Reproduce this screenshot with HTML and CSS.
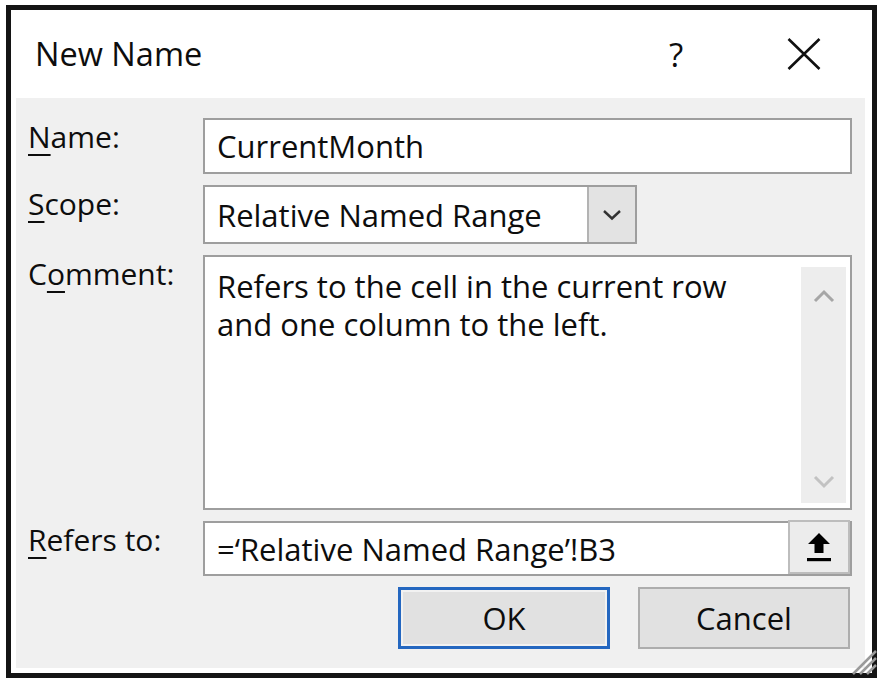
FILE: index.html
```html
<!DOCTYPE html>
<html>
<head>
<meta charset="utf-8">
<link rel="stylesheet" href="styles.css">
</head>
<body>
<div class="dialog">
  <div class="titlebar">
    <span class="title">New Name</span>
    <span class="help">?</span>
    <span class="close">
      <svg width="34" height="32" viewBox="0 0 34 32"><path d="M1.5 1L32.5 31M32.5 1L1.5 31" stroke="#111" stroke-width="2.6" fill="none"/></svg>
    </span>
  </div>
  <div class="panel">
    <div class="label"><u>N</u>ame:</div>
    <div class="field input">CurrentMonth</div>

    <div class="label"><u>S</u>cope:</div>
    <div class="field">
      <div class="combo">
        <span class="combo-text">Relative Named Range</span>
        <span class="combo-btn">
          <svg width="20" height="12" viewBox="0 0 20 12"><path d="M2 2L10 9.5L18 2" stroke="#333" stroke-width="2.4" fill="none"/></svg>
        </span>
      </div>
    </div>

    <div class="label">C<u>o</u>mment:</div>
    <div class="field textarea">
      <div class="ta-text">Refers to the cell in the current row and one column to the left.</div>
      <div class="scroll">
        <svg width="24" height="14" viewBox="0 0 24 14"><path d="M3 12L12 3L21 12" stroke="#a6a6a6" stroke-width="3" fill="none"/></svg>
        <svg width="24" height="14" viewBox="0 0 24 14"><path d="M3 2L12 11L21 2" stroke="#c2c2c2" stroke-width="3" fill="none"/></svg>
      </div>
    </div>

    <div class="label"><u>R</u>efers to:</div>
    <div class="field input refers">
      <span class="ref-text">=‘Relative Named Range’!B3</span>
      <span class="ref-btn">
        <svg width="26" height="32" viewBox="0 0 26 32"><path d="M13 2L2 13H8.5V22H17.5V13H24Z" fill="#000"/><rect x="1" y="27" width="24" height="3.2" fill="#000"/></svg>
      </span>
    </div>

    <div class="buttons">
      <button class="btn ok">OK</button>
      <button class="btn">Cancel</button>
    </div>
  </div>
  <svg class="grip" width="26" height="26" viewBox="0 0 26 26">
    <path d="M2 25L25 2M9 25L25 9M16 25L25 16" stroke="#9a9a9a" stroke-width="2.5" fill="none"/>
  </svg>
</div>
</body>
</html>
```

FILE: styles.css
```css
html, body {
  margin: 0;
  padding: 0;
  background: #fff;
}

body {
  font-family: "Open Sans", "Noto Sans", sans-serif;
  font-weight: 500;
  color: #0d0d0d;
}

.dialog {
  position: relative;
  margin: 5px 0 0 6px;
  width: 871px;
  height: 673px;
  box-sizing: border-box;
  border: 5px solid #141414;
  background: #fff;
  padding: 0 7px 5px 5px;
  display: flex;
  flex-direction: column;
}

.titlebar {
  height: 88px;
  flex: none;
  display: flex;
  align-items: center;
  padding-left: 19px;
}

.title {
  font-size: 32.5px;
  line-height: 1;
}

.help {
  margin-left: auto;
  width: 40px;
  text-align: center;
  font-size: 33px;
  line-height: 1;
}

.close {
  margin-left: 91px;
  margin-right: 44px;
  display: flex;
}

.panel {
  flex: none;
  height: 570px;
  box-sizing: border-box;
  background: #f0f0f0;
  padding: 20px 13px 0 12px;
  display: grid;
  grid-template-columns: 175px 1fr;
  grid-template-rows: 56px 59px 255px 55px 62px;
  row-gap: 11px;
}

.label {
  font-size: 30px;
  line-height: 40px;
  margin-top: -1px;
}

.label u {
  text-decoration-thickness: 2px;
  text-underline-offset: 6px;
}

.field {
  box-sizing: border-box;
}

.input {
  background: #fff;
  border: 2px solid #9e9e9e;
  display: flex;
  align-items: center;
  padding-left: 12px;
  font-size: 31px;
}

.combo {
  width: 434px;
  height: 100%;
  box-sizing: border-box;
  background: #fff;
  border: 2px solid #9e9e9e;
  display: flex;
  align-items: stretch;
  font-size: 31px;
}

.combo-text {
  flex: 1;
  display: flex;
  align-items: center;
  padding-left: 12px;
}

.combo-btn {
  width: 46px;
  background: #e3e3e3;
  border-left: 2px solid #b3b3b3;
  display: flex;
  align-items: center;
  justify-content: center;
}

.textarea {
  background: #fff;
  border: 2px solid #9e9e9e;
  display: flex;
  padding: 10px 4px 5px 12px;
  font-size: 31px;
  line-height: 38px;
}

.ta-text {
  flex: 1;
  padding-right: 40px;
}

.scroll {
  width: 45px;
  background: #ededed;
  display: flex;
  flex-direction: column;
  justify-content: space-between;
  align-items: center;
  padding: 22px 0 14px;
}

.refers {
  padding-right: 0;
}

.ref-text {
  flex: 1;
}

.ref-btn {
  align-self: stretch;
  width: 58px;
  margin: -3px 0 0 0;
  background: #ececec;
  border: 2px solid #bdbdbd;
  display: flex;
  align-items: center;
  justify-content: center;
}

.buttons {
  grid-column: 1 / 3;
  display: flex;
  justify-content: flex-end;
  gap: 28px;
  padding-right: 2px;
}

.btn {
  width: 212px;
  height: 62px;
  box-sizing: border-box;
  background: #e1e1e1;
  border: 2px solid #adadad;
  font-family: "Open Sans", "Noto Sans", sans-serif;
  font-weight: 500;
  font-size: 31px;
  color: #0d0d0d;
  padding: 0;
}

.btn.ok {
  border: 3px solid #2467c0;
  box-shadow: inset 0 0 0 2px #f2f2f2;
}

.grip {
  position: absolute;
  right: -5px;
  bottom: -2px;
}
```
